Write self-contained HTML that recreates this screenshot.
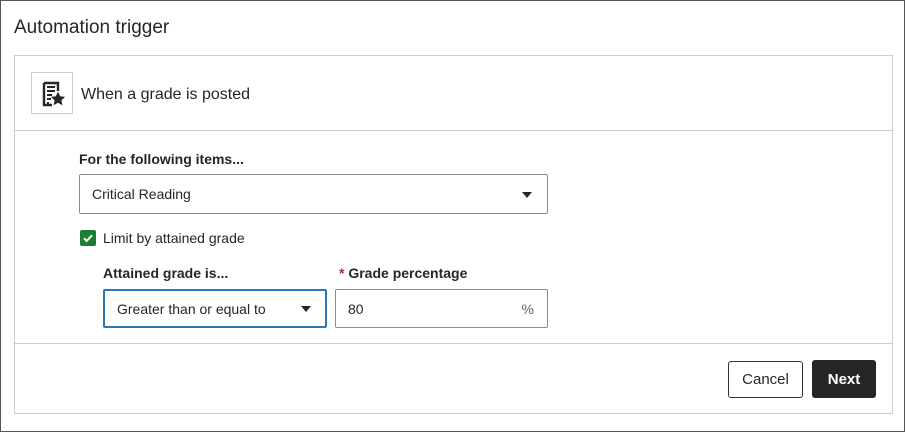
<!DOCTYPE html>
<html><head><style>
*{box-sizing:border-box;margin:0;padding:0}
body{width:905px;height:432px;background:#fff;font-family:"Liberation Sans",sans-serif;color:#262626;position:relative;overflow:hidden}
.outer{position:absolute;left:0;top:0;width:905px;height:432px;border:1px solid #555}
.abs{position:absolute}
h1{position:absolute;left:14px;top:17px;font-size:19px;font-weight:normal;color:#262626}
.panel{position:absolute;left:14px;top:55px;width:879px;height:359px;border:1px solid #cdcdcd}
.hl{position:absolute;left:0;width:100%;height:1px;background:#cdcdcd}
.icon{position:absolute;left:16px;top:16px;width:42px;height:42px;border:1px solid #cdcdcd;background:#fff}
.lbl{font-size:14px;font-weight:bold;color:#262626}
.box{position:absolute;border:1px solid #8c8c8c;border-radius:2px;background:#fff;font-size:14px;color:#262626;padding-left:12px;display:flex;align-items:center}
.tri{position:absolute;width:0;height:0;border-left:5px solid transparent;border-right:5px solid transparent;border-top:6px solid #262626}
.btn{position:absolute;border-radius:3px;font-size:15px;display:flex;align-items:center;justify-content:center}
</style></head><body>
<div class="outer"></div>
<h1>Automation trigger</h1>
<div class="panel">
  <div class="icon"><svg width="42" height="42" viewBox="0 0 42 42"><path d="M12 10h14v8M12 10v22h8" fill="none" stroke="#262626" stroke-width="2.4"/><path d="M15 14h8M15 18h8M15 22h5M15 26h4M15 30h2" stroke="#262626" stroke-width="2"/><path d="M26 20l1.8 3.8 4 .5-3 2.8.8 4-3.6-2-3.6 2 .8-4-3-2.8 4-.5z" fill="#262626" stroke="#262626" stroke-width="1.2"/></svg></div>
  <div class="abs" style="left:66px;top:30px;font-size:16px;color:#262626">When a grade is posted</div>
  <div class="hl" style="top:74px"></div>
  <div class="abs lbl" style="left:64px;top:95px">For the following items...</div>
  <div class="box" style="left:64px;top:118px;width:469px;height:40px">Critical Reading</div>
  <div class="tri" style="left:507px;top:136px"></div>
  <div class="abs" style="left:65px;top:174px;width:16px;height:16px;background:#1e7d32;border-radius:2px"><svg width="16" height="16"><path d="M4 8.3l2.7 2.6L12 5.3" fill="none" stroke="#fff" stroke-width="2"/></svg></div>
  <div class="abs" style="left:88px;top:174px;font-size:14px">Limit by attained grade</div>
  <div class="abs lbl" style="left:88px;top:209px">Attained grade is...</div>
  <div class="abs lbl" style="left:324px;top:209px"><span style="color:#c0262d">*</span> Grade percentage</div>
  <div class="box" style="left:88px;top:233px;width:224px;height:39px;border:2px solid #2a74b8">Greater than or equal to</div>
  <div class="tri" style="left:286px;top:250px"></div>
  <div class="box" style="left:320px;top:233px;width:213px;height:39px">80<span style="position:absolute;right:13px;color:#666">%</span></div>
  <div class="hl" style="top:287px"></div>
  <div class="btn" style="left:713px;top:305px;width:75px;height:37px;border:1px solid #333;color:#262626">Cancel</div>
  <div class="btn" style="left:797px;top:304px;width:64px;height:38px;background:#262626;color:#fff;font-weight:bold">Next</div>
</div>
</body></html>
